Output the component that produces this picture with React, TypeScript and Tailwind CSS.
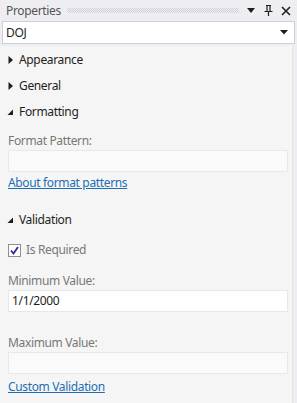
import React from "react";

const font = { fontFamily: '"Noto Sans", "Open Sans", sans-serif', letterSpacing: "-0.35px" };

function TriRight() {
  return (
    <svg width="6" height="8" viewBox="0 0 6 8" className="shrink-0">
      <path d="M0.5 0 L5 4 L0.5 8 Z" fill="#1e1e1e" />
    </svg>
  );
}
function TriDown() {
  return (
    <svg width="7" height="7" viewBox="0 0 7 7" className="shrink-0">
      <path d="M6 0.5 L6 6 L0.5 6 Z" fill="#1e1e1e" />
    </svg>
  );
}

function Header({ open, label }: { open: boolean; label: string }) {
  return (
    <div className="flex items-center h-[26px] pl-[7px] gap-[5px] text-[12px] text-[#1e1e1e]">
      <div className="w-[7px] flex justify-center">{open ? <TriDown /> : <TriRight />}</div>
      <span>{label}</span>
    </div>
  );
}

export default function App() {
  return (
    <div className="w-[297px] h-[403px] bg-[#eeeef2] flex flex-col overflow-hidden" style={font}>
      {/* title bar */}
      <div className="h-[21px] flex items-center pl-[6px] pr-[6px] text-[12px] text-[#555]">
        <span className="leading-none">Properties</span>
        <div
          className="flex-1 h-[5px] ml-[6px] mr-[8px]"
          style={{
            backgroundImage: "repeating-conic-gradient(#d0d0d6 0 25%, transparent 0 50%)",
            backgroundSize: "2px 2px",
          }}
        />
        <svg width="9" height="6" viewBox="0 0 9 6" className="mr-[8px]">
          <path d="M0 0 H8 L4 5 Z" fill="#1e1e1e" />
        </svg>
        <svg width="9" height="11" viewBox="0 0 9 11" className="mr-[8px]">
          <path d="M2 0.5 H7 M3 0.5 V6 M6 0.5 V6 M0.5 6.5 H8.5 M4.5 6.5 V11" stroke="#1e1e1e" strokeWidth="1.2" fill="none" />
        </svg>
        <svg width="10" height="10" viewBox="0 0 10 10">
          <path d="M1 1 L9 9 M9 1 L1 9" stroke="#1e1e1e" strokeWidth="1.6" />
        </svg>
      </div>
      {/* combo */}
      <div className="mx-[2px] h-[23px] bg-white border border-[#cccedb] flex items-center pl-[3px] pr-[6px] text-[12px] text-[#1e1e1e]">
        <span className="flex-1">DOJ</span>
        <svg width="8" height="5" viewBox="0 0 8 5">
          <path d="M0 0 H8 L4 4.5 Z" fill="#1e1e1e" />
        </svg>
      </div>
      {/* content */}
      <div className="flex-1 mt-[2px] mr-[4px] bg-[#f5f5f5] border-r border-[#e6e6e6] flex flex-col pt-[1px]">
        <Header open={false} label="Appearance" />
        <Header open={false} label="General" />
        <Header open={true} label="Formatting" />
        <div className="px-[8px] pr-[4px]">
          <div className="mt-[8px] text-[12px] text-[#777] leading-[16px]">Format Pattern:</div>
          <div className="mt-[1px] h-[22px] bg-[#fafafa] border border-[#e8e8e8]" />
          <div className="mt-[3px] text-[12px] leading-[16px] text-[#1e6eb4] underline">About format patterns</div>
        </div>
        <div className="mt-[16px]">
          <Header open={true} label="Validation" />
        </div>
        <div className="px-[8px] pr-[4px]">
          <div className="mt-[9px] flex items-center gap-[5px] h-[16px]">
            <div className="w-[13px] h-[13px] border border-[#8e8f8f] bg-white flex items-center justify-center">
              <svg width="9" height="9" viewBox="0 0 9 9">
                <path d="M1 4.5 L3.5 7.5 L8 1" stroke="#2b2b9a" strokeWidth="1.8" fill="none" />
              </svg>
            </div>
            <span className="text-[12px] text-[#777]">Is Required</span>
          </div>
          <div className="mt-[15px] text-[12px] text-[#777] leading-[16px]">Minimum Value:</div>
          <div className="mt-[1px] h-[22px] bg-white border border-[#e8e8e8] flex items-center pl-[3px] text-[12px] text-[#1e1e1e]">1/1/2000</div>
          <div className="mt-[23px] text-[12px] text-[#777] leading-[16px]">Maximum Value:</div>
          <div className="mt-[1px] h-[22px] bg-[#fafafa] border border-[#e8e8e8]" />
          <div className="mt-[5px] text-[12px] leading-[16px] text-[#1e6eb4] underline">Custom Validation</div>
        </div>
      </div>
    </div>
  );
}
